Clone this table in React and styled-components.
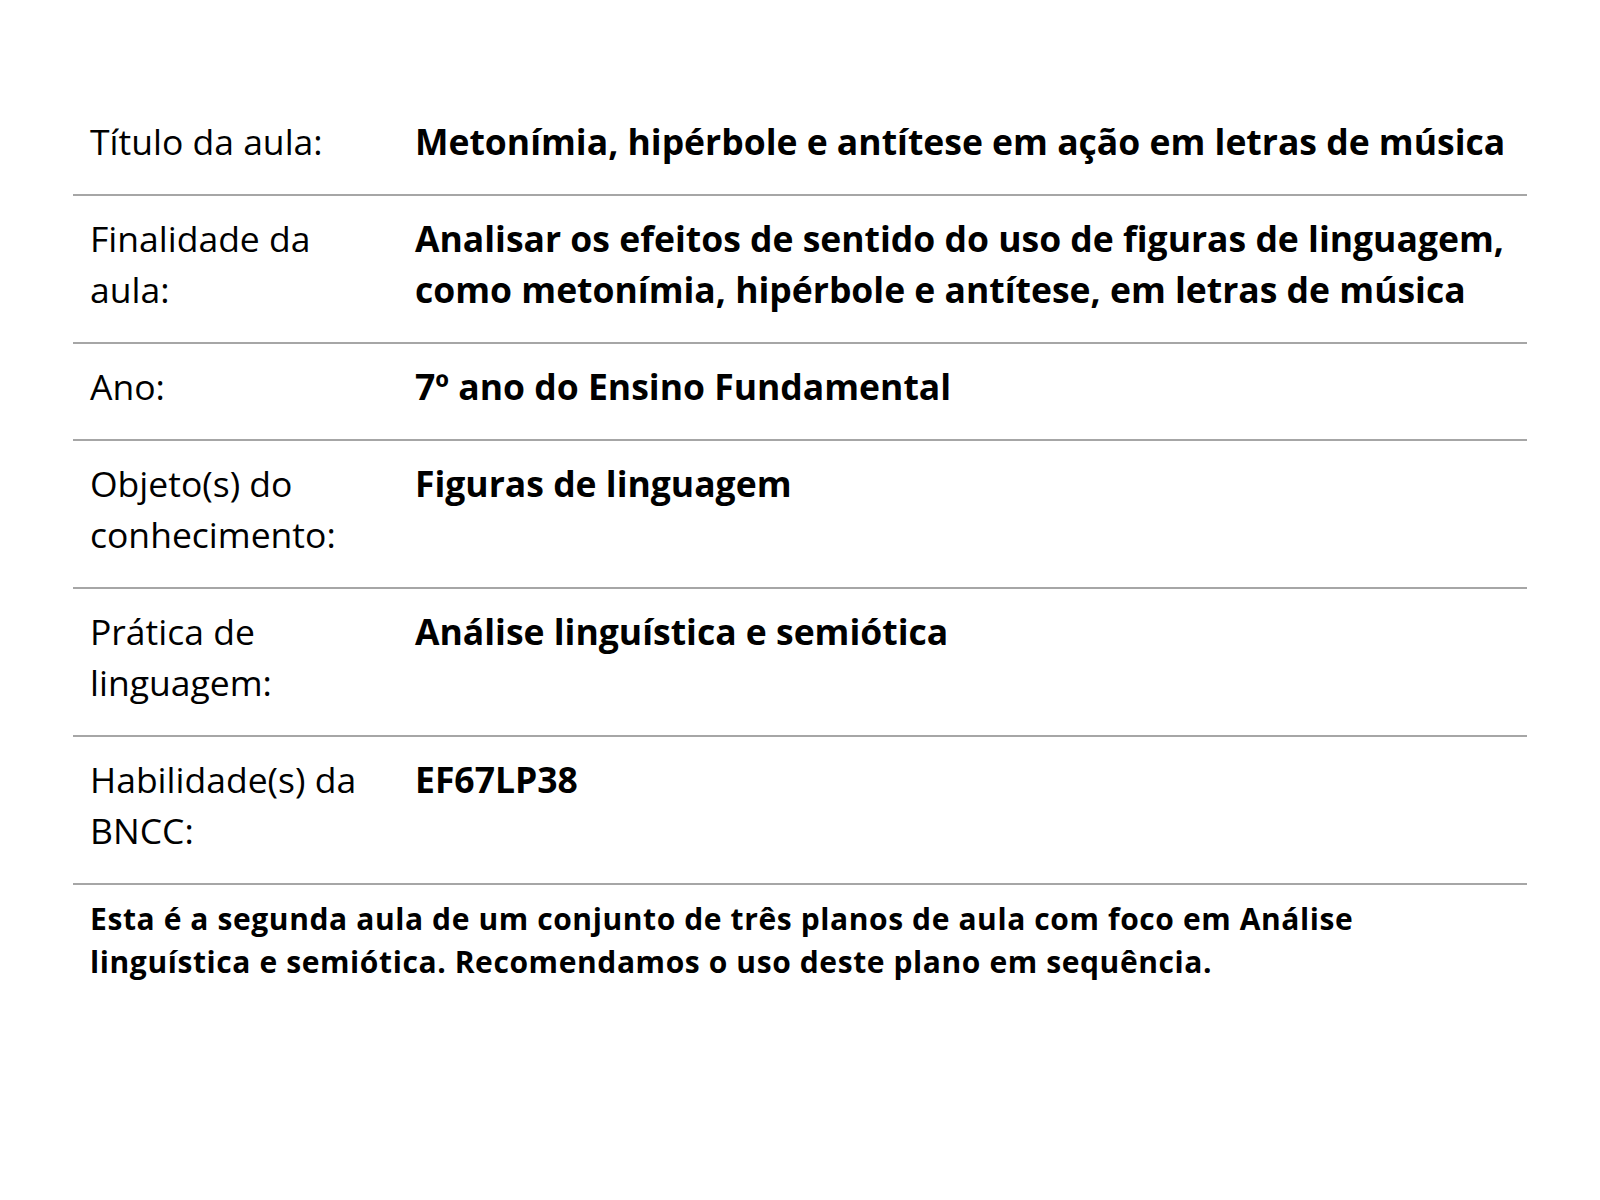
import React from "react";
import styled, { createGlobalStyle } from "styled-components";

const GlobalStyle = createGlobalStyle`
  body {
    margin: 0;
    background: #ffffff;
    font-family: "Open Sans", "Noto Sans", sans-serif;
    color: #000000;
  }
`;

const Page = styled.div`
  padding: 99px 73px 0 73px;
  width: 1454px;
`;

const Table = styled.div`
  display: flex;
  flex-direction: column;
`;

const Row = styled.div`
  display: grid;
  grid-template-columns: 325px 1fr;
  border-bottom: 2px solid #a6a6a6;
  padding: 17px 0 27px 0;
`;

const Label = styled.div`
  padding: 0 17px;
  font-size: 35.5px;
  line-height: 51px;
  font-weight: 400;
`;

const Value = styled.div`
  padding: 0 17px;
  font-size: 35.5px;
  line-height: 51px;
  font-weight: 700;
`;

const Note = styled.p`
  margin: 0;
  padding: 12px 17px 0 17px;
  font-size: 30px;
  line-height: 43px;
  letter-spacing: 0.6px;
  font-weight: 700;
`;

const rows = [
  ["Título da aula:", "Metonímia, hipérbole e antítese em ação em letras de música"],
  [
    "Finalidade da aula:",
    "Analisar os efeitos de sentido do uso de figuras de linguagem, como metonímia, hipérbole e antítese, em letras de música",
  ],
  ["Ano:", "7º ano do Ensino Fundamental"],
  ["Objeto(s) do conhecimento:", "Figuras de linguagem"],
  ["Prática de linguagem:", "Análise linguística e semiótica"],
  ["Habilidade(s) da BNCC:", "EF67LP38"],
];

const App = () => {
  return (
    <>
      <GlobalStyle />
      <Page>
        <Table>
          {rows.map(([label, value], index) => (
            <Row key={index}>
              <Label>{label}</Label>
              <Value>{value}</Value>
            </Row>
          ))}
        </Table>
        <Note>
          Esta é a segunda aula de um conjunto de três planos de aula com foco
          em Análise linguística e semiótica. Recomendamos o uso deste plano em
          sequência.
        </Note>
      </Page>
    </>
  );
};

export default App;
